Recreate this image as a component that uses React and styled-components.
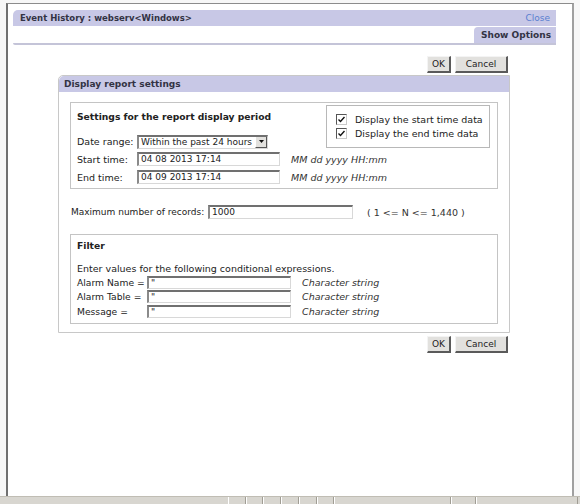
import React from "react"
import styled, {createGlobalStyle} from "styled-components"

const GlobalStyle = createGlobalStyle`
  html, body {
    margin: 0;
    padding: 0;
    background: #f7f7f7;
  }
  body {
    font-family: "DejaVu Sans", Verdana, sans-serif;
    font-size: 9.5px;
    color: #222;
  }
`

const Page = styled.div`
  width: 580px;
  height: 504px;
  display: flex;
  flex-direction: column;
  overflow: hidden;
`

const Frame = styled.div`
  margin: 3px 6px 0 6px;
  height: 494px;
  box-sizing: border-box;
  background: #fff;
  border-top: 1px solid #8c8c8c;
  border-left: 2px solid #707070;
  border-right: 2px solid #a0a0a0;
  padding: 6px 16px 0 5px;
  display: flex;
  flex-direction: column;
`

const TitleBar = styled.div`
  height: 16px;
  background: #c8c8e6;
  border-top-left-radius: 5px;
  display: flex;
  align-items: center;
  justify-content: space-between;
  padding: 0 6px 0 7px;
`

const Title = styled.span`
  font-weight: bold;
  font-size: 8.5px;
  color: #333344;
`

const CloseLink = styled.a`
  color: #5a7fd0;
  font-size: 9px;
  cursor: pointer;
`

const TabRow = styled.div`
  display: flex;
  justify-content: flex-end;
  padding-top: 1px;
  border-bottom: 2px solid #c4c4d8;
  border-bottom-left-radius: 2px;
`

const Tab = styled.div`
  background: #c8c8e6;
  border-top-left-radius: 4px;
  font-weight: bold;
  font-size: 9px;
  color: #333344;
  height: 16px;
  line-height: 16px;
  padding: 0 5px 0 7px;
`

const Content = styled.div`
  padding: 11px 0 0 45px;
  width: 452px;
  display: flex;
  flex-direction: column;
`

const ButtonRow = styled.div`
  display: flex;
  justify-content: flex-end;
  gap: 4px;
  padding-right: 2px;
  margin: ${p => p.$bottom ? "3px 0 0" : "0 0 2px"};
`

const Button = styled.button`
  font-family: inherit;
  font-size: 9px;
  color: #222;
  height: 17px;
  min-width: ${p => p.$wide ? "53px" : "24px"};
  padding: 0 4px;
  background: #e2e1de;
  border-style: solid;
  border-width: 1px 2px 2px 1px;
  border-color: #f4f4f4 #5a5a5a #5a5a5a #f4f4f4;
`

const Panel = styled.div`
  border: 1px solid #c8c8c8;
  border-top-left-radius: 5px;
`

const PanelHeader = styled.div`
  height: 16px;
  line-height: 16px;
  background: #c8c8e6;
  border-top-left-radius: 5px;
  font-weight: bold;
  font-size: 9px;
  color: #333344;
  padding-left: 5px;
`

const PanelBody = styled.div`
  padding: 10px 11px 8px 11px;
  display: flex;
  flex-direction: column;
`

const Section = styled.div`
  border: 1px solid #c4c4c4;
  padding: ${p => p.$filter ? "5px 6px 4px" : "2px 7px 2px 6px"};
  display: flex;
  flex-direction: column;
`

const TopRow = styled.div`
  display: flex;
  justify-content: space-between;
`

const SectionTitle = styled.div`
  font-weight: bold;
  font-size: 9.2px;
  line-height: 12px;
  padding: ${p => p.$filter ? "0 0 11px" : "6px 0 10px"};
`

const Note = styled.div`
  margin-bottom: 1px;
`

const CheckBox = styled.div`
  border: 1px solid #b8b8b8;
  width: 164px;
  height: 43px;
  box-sizing: border-box;
  padding: 8px 0 0 9px;
  display: flex;
  flex-direction: column;
  gap: 3px;
`

const CheckLine = styled.label`
  display: flex;
  align-items: center;
  gap: 8px;
  height: 11px;
  white-space: nowrap;
`

const Box = styled.span`
  width: 9px;
  height: 9px;
  border-style: solid;
  border-width: 1px;
  border-color: #555 #c8c8c8 #c8c8c8 #555;
  background: #fff;
  display: inline-flex;
  align-items: center;
  justify-content: center;
`

const Row = styled.div`
  display: flex;
  align-items: center;
  height: ${p => p.$h || "18px"};
`

const Label = styled.span`
  width: ${p => p.$w || "60px"};
  margin-right: ${p => p.$mr || "0"};
  font-size: ${p => p.$fs || "inherit"};
  flex-shrink: 0;
  white-space: nowrap;
`

const Input = styled.div`
  width: ${p => p.$w || "143px"};
  height: ${p => p.$hh || "14px"};
  box-sizing: border-box;
  border-style: solid;
  border-width: 2px 1px 1px 2px;
  border-color: #707070 #d8d8d8 #d8d8d8 #8a8a8a;
  padding: 0 0 0 2px;
  font-size: 9px;
  line-height: 11px;
  background: #fff;
  flex-shrink: 0;
  white-space: nowrap;
`

const Hint = styled.span`
  font-style: ${p => p.$plain ? "normal" : "italic"};
  margin-left: ${p => p.$ml || "11px"};
  color: #333;
  white-space: nowrap;
`

const Select = styled.div`
  width: 131px;
  height: 14px;
  box-sizing: border-box;
  border-style: solid;
  border-width: 2px 1px 1px 2px;
  border-color: #707070 #d8d8d8 #d8d8d8 #8a8a8a;
  display: flex;
  align-items: stretch;
  padding-left: 2px;
`

const SelectText = styled.span`
  flex: 1;
  font-size: 9px;
  line-height: 11px;
  white-space: nowrap;
  overflow: hidden;
`

const DropButton = styled.span`
  width: 10px;
  flex-shrink: 0;
  background: #e2e1de;
  border-left: 1px solid #fff;
  border-right: 1px solid #555;
  border-bottom: 1px solid #555;
  display: flex;
  align-items: center;
  justify-content: center;
`

const MaxRow = styled.div`
  display: flex;
  align-items: center;
  padding: 16px 0 15px 1px;
`

const Spacer = styled.div`
  flex: 1;
`

const StatusBar = styled.div`
  height: 7px;
  background: #d8d6d0;
  border-top: 1px solid #c0bdb4;
  display: flex;
  padding-left: 228px;
`

const StatusCell = styled.div`
  width: ${p => p.$w}px;
  border-left: 1px solid #fff;
  border-right: 1px solid #a09d94;
`

const Check = () => (
    <Box>
        <svg width="7" height="7" viewBox="0 0 7 7">
            <path d="M0.5 3.5 L2.5 5.5 L6.5 1" stroke="#111" strokeWidth="1.4" fill="none"/>
        </svg>
    </Box>
)

const filterRows = ["Alarm Name =", "Alarm Table =", "Message ="]

const App = () => {
    return (
        <Page>
            <GlobalStyle/>
            <Frame>
                <TitleBar>
                    <Title>Event History : webserv&lt;Windows&gt;</Title>
                    <CloseLink>Close</CloseLink>
                </TitleBar>
                <TabRow>
                    <Tab>Show Options</Tab>
                </TabRow>
                <Content>
                    <ButtonRow>
                        <Button>OK</Button>
                        <Button $wide>Cancel</Button>
                    </ButtonRow>
                    <Panel>
                        <PanelHeader>Display report settings</PanelHeader>
                        <PanelBody>
                            <Section>
                                <TopRow>
                                    <div>
                                        <SectionTitle>Settings for the report display period</SectionTitle>
                                        <Row $h="17px">
                                            <Label>Date range:</Label>
                                            <Select>
                                                <SelectText>Within the past 24 hours</SelectText>
                                                <DropButton>
                                                    <svg width="5" height="3" viewBox="0 0 5 3">
                                                        <path d="M0 0 H5 L2.5 3 Z" fill="#111"/>
                                                    </svg>
                                                </DropButton>
                                            </Select>
                                        </Row>
                                    </div>
                                    <CheckBox>
                                        <CheckLine><Check/>Display the start time data</CheckLine>
                                        <CheckLine><Check/>Display the end time data</CheckLine>
                                    </CheckBox>
                                </TopRow>
                                <Row>
                                    <Label>Start time:</Label>
                                    <Input>04 08 2013 17:14</Input>
                                    <Hint>MM dd yyyy HH:mm</Hint>
                                </Row>
                                <Row>
                                    <Label>End time:</Label>
                                    <Input>04 09 2013 17:14</Input>
                                    <Hint>MM dd yyyy HH:mm</Hint>
                                </Row>
                            </Section>
                            <MaxRow>
                                <Label $w="137px" $fs="9px">Maximum number of records:</Label>
                                <Input $w="145px">1000</Input>
                                <Hint $plain $ml="14px">( 1 &lt;= N &lt;= 1,440 )</Hint>
                            </MaxRow>
                            <Section $filter>
                                <SectionTitle $filter>Filter</SectionTitle>
                                <Note>Enter values for the following conditional expressions.</Note>
                                {filterRows.map(label => (
                                    <Row key={label} $h="14.5px">
                                        <Label $w="70px" $fs="9.2px">{label}</Label>
                                        <Input $w="144px" $hh="13px">"</Input>
                                        <Hint>Character string</Hint>
                                    </Row>
                                ))}
                            </Section>
                        </PanelBody>
                    </Panel>
                    <ButtonRow $bottom>
                        <Button>OK</Button>
                        <Button $wide>Cancel</Button>
                    </ButtonRow>
                </Content>
                <Spacer/>
            </Frame>
            <StatusBar>
                {[16, 15, 16, 16, 16, 15, 115, 23, 100].map((w, i) => <StatusCell key={i} $w={w}/>)}
            </StatusBar>
        </Page>
    )
}

export default App
